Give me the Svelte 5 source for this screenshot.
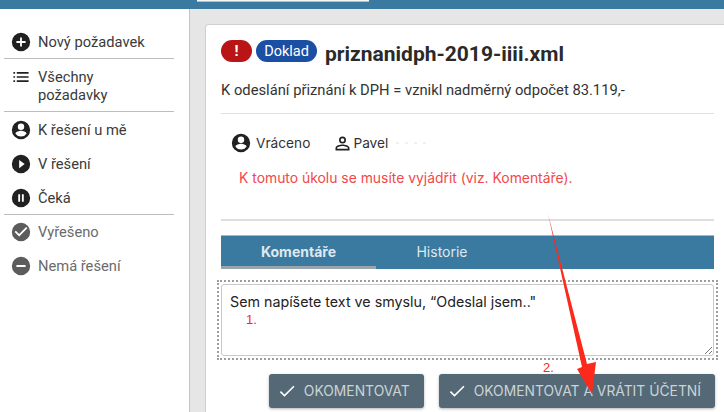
<script>
  const groups = [
    [{ icon: "plus", label: "Nový požadavek" }],
    [{ icon: "list", label: "Všechny požadavky" }],
    [
      { icon: "person", label: "K řešení u mě" },
      { icon: "play", label: "V řešení" },
      { icon: "pause", label: "Čeká" },
    ],
    [
      { icon: "check", label: "Vyřešeno", muted: true },
      { icon: "minus", label: "Nemá řešení", muted: true },
    ],
  ];
</script>

{#snippet icon(name)}
  <svg class="icon" viewBox="0 0 24 24" width="22" height="22" aria-hidden="true">
    {#if name === "plus"}
      <path d="M12 2a10 10 0 1 0 0 20 10 10 0 0 0 0-20zm5 11h-4v4h-2v-4H7v-2h4V7h2v4h4v2z" />
    {:else if name === "list"}
      <path d="M3 8h2V6H3v2zm0 5h2v-2H3v2zm0 5h2v-2H3v2zm4-5h14v-2H7v2zm0 5h14v-2H7v2zM7 6v2h14V6H7z" transform="translate(12 12) scale(.92) translate(-12 -12)" />
    {:else if name === "person"}
      <path d="M12 2a10 10 0 1 0 0 20 10 10 0 0 0 0-20zm0 3a3.5 3.5 0 1 1 0 7 3.5 3.5 0 0 1 0-7zm0 14.2a7.2 7.2 0 0 1-6-3.2c0-2 4-3.1 6-3.1s6 1.1 6 3.1a7.2 7.2 0 0 1-6 3.2z" />
    {:else if name === "play"}
      <path d="M12 2a10 10 0 1 0 0 20 10 10 0 0 0 0-20zm-2 14.5v-9l6 4.5-6 4.5z" />
    {:else if name === "pause"}
      <path d="M12 2a10 10 0 1 0 0 20 10 10 0 0 0 0-20zm-1 14H9V8h2v8zm4 0h-2V8h2v8z" />
    {:else if name === "check"}
      <path d="M12 2a10 10 0 1 0 0 20 10 10 0 0 0 0-20zm-2 15-5-5 1.4-1.4 3.6 3.6 7.6-7.6L19 8l-9 9z" />
    {:else if name === "minus"}
      <path d="M12 2a10 10 0 1 0 0 20 10 10 0 0 0 0-20zm5 11H7v-2h10v2z" />
    {/if}
  </svg>
{/snippet}

{#snippet tick()}
  <svg class="tick" viewBox="0 0 24 24" width="20" height="20" aria-hidden="true">
    <path d="M9 16.2 4.8 12l-1.4 1.4L9 19 21 7l-1.4-1.4L9 16.2z" />
  </svg>
{/snippet}

<div class="page">
  <header class="topbar"><div class="search"></div></header>

  <div class="body">
    <aside class="sidebar">
      {#each groups as group}
        <ul class="group">
          {#each group as item}
            <li class="item" class:muted={item.muted}>
              {@render icon(item.icon)}
              <span class="label">{item.label}</span>
            </li>
          {/each}
        </ul>
      {/each}
    </aside>

    <main class="content">
      <section class="card">
        <div class="title-row">
          <span class="badge alert">!</span>
          <span class="badge doc">Doklad</span>
          <h1>priznanidph-2019-iiii.xml</h1>
        </div>
        <p class="summary">K odeslání přiznání k DPH = vznikl nadměrný odpočet 83.119,-</p>

        <div class="status-box">
          <div class="status-row">
            <span class="status">
              {@render icon("person")}
              Vráceno
            </span>
            <span class="status owner">
              <svg class="icon" viewBox="0 0 24 24" width="21" height="21" aria-hidden="true">
                <path d="M12 5.9a2.1 2.1 0 1 1 0 4.2 2.1 2.1 0 0 1 0-4.2m0 9c3 0 6.1 1.5 6.1 2.1v1.1H5.9V17c0-.6 3.1-2.1 6.1-2.1M12 4a4 4 0 1 0 0 8 4 4 0 0 0 0-8zm0 9c-2.7 0-8 1.3-8 4v3h16v-3c0-2.7-5.3-4-8-4z" />
              </svg>
              Pavel
              <span class="blur"></span>
            </span>
          </div>
          <p class="warning">K tomuto úkolu se musíte vyjádřit (viz. Komentáře).</p>
        </div>

        <nav class="tabs">
          <button class="tab active">Komentáře</button>
          <button class="tab">Historie</button>
        </nav>

        <div class="comment-frame">
          <div class="comment">
            Sem napíšete text ve smyslu, “Odeslal jsem.."
            <svg class="grip" viewBox="0 0 8 8" width="8" height="8" aria-hidden="true">
              <path d="M1 8 8 1M5 8l3-3" stroke="#777" fill="none" />
            </svg>
          </div>
        </div>

        <div class="actions">
          <button class="action">{@render tick()} OKOMENTOVAT</button>
          <button class="action">{@render tick()} OKOMENTOVAT A VRÁTIT ÚČETNÍ</button>
        </div>
      </section>
    </main>
  </div>

  <!-- annotations drawn over the screenshot -->
  <span class="note one">1.</span>
  <span class="note two">2.</span>
  <svg class="arrow" viewBox="0 0 724 412" width="724" height="412" aria-hidden="true">
    <path d="M548 214 L587 364 L596 362 L592 394 L577 369 L582 367 Z" fill="#fc2a1c" />
  </svg>
</div>

<style>
  :global(body) {
    margin: 0;
    background: #e6e6e6;
  }

  .page {
    position: relative;
    width: 724px;
    height: 412px;
    overflow: hidden;
    display: flex;
    flex-direction: column;
    font-family: Roboto, sans-serif;
    color: #212121;
  }

  .topbar {
    flex: 0 0 9px;
    background: #3a79a0;
  }

  .search {
    box-sizing: border-box;
    width: 172px;
    height: 2px;
    margin-left: 197px;
    background: #f7f7f7;
    border-bottom: 1px solid #bcbcbc;
  }

  .body {
    flex: 1;
    display: flex;
    min-height: 0;
  }

  .sidebar {
    flex: 0 0 190px;
    box-sizing: border-box;
    padding: 15px 15px 0 4px;
    background: #fff;
    border-right: 1px solid #c4c4c4;
    font-size: 14.7px;
  }

  .group {
    list-style: none;
    margin: 0;
    padding: 0;
    border-bottom: 1px solid #bdbdbd;
  }

  .group:last-child {
    border-bottom: 0;
  }

  .item {
    display: flex;
    align-items: flex-start;
    gap: 6px;
    padding: 9px 0 7px 6px;
    line-height: 18px;
    color: #3a3a3a;
  }

  .label {
    max-width: 110px;
  }

  .item .icon {
    flex: none;
    margin: -2px 0;
    fill: #212121;
  }

  .item.muted {
    padding: 8px 0 8px 6px;
    color: #6a6a6a;
  }

  .item.muted .icon {
    fill: #5c5c5c;
  }

  .content {
    flex: 1;
    min-width: 0;
    padding: 15px 0 0 15px;
  }

  .card {
    box-sizing: border-box;
    height: 420px;
    padding: 15px 0 0 15px;
    background: #fff;
    border: 1px solid #d0d0d0;
    border-right: 0;
    border-radius: 4px 0 0 0;
  }

  .title-row {
    display: flex;
    align-items: flex-start;
    gap: 4px;
    height: 28px;
  }

  .badge {
    display: inline-flex;
    align-items: center;
    justify-content: center;
    height: 22px;
    border-radius: 11px;
    color: #fff;
  }

  .alert {
    width: 31px;
    background: #b91516;
    font-weight: 700;
    font-size: 15px;
  }

  .doc {
    width: 61px;
    background: #1a4fa3;
    font-size: 14.5px;
  }

  h1 {
    margin: 0 0 0 4px;
    font-size: 21px;
    line-height: 28px;
    font-weight: 700;
    color: #2a2a2a;
  }

  .summary {
    margin: 13px 0 0;
    font-size: 14.75px;
    line-height: 18px;
    color: #333;
  }

  .status-box {
    box-sizing: border-box;
    width: 493px;
    height: 108px;
    margin-top: 14px;
    padding: 18px 0 0 9px;
    border-top: 1px solid #e0e0e0;
    border-bottom: 2px solid #dedede;
  }

  .status-row {
    display: flex;
    gap: 22px;
  }

  .status {
    display: flex;
    align-items: center;
    gap: 4px;
    height: 22px;
    font-family: Inter, sans-serif;
    font-size: 13.7px;
    color: #333;
  }

  .status.owner {
    gap: 0;
  }

  .status .icon {
    fill: #212121;
  }

  .blur {
    width: 30px;
    height: 2px;
    margin-left: 8px;
    background: repeating-linear-gradient(90deg, #f0f0f0 0 3px, transparent 3px 9px);
  }

  .warning {
    margin: 15px 0 0 9px;
    font-family: Inter, sans-serif;
    font-size: 13.9px;
    line-height: 18px;
    color: #f2484a;
  }

  .tabs {
    display: flex;
    box-sizing: border-box;
    width: 493px;
    height: 34px;
    margin-top: 14px;
    background: #3a79a0;
    border-top: 1px solid #9ab9cd;
  }

  .tab {
    width: 155px;
    padding: 0 0 3px;
    border: 0;
    background: none;
    font-family: Inter, sans-serif;
    font-size: 14px;
    color: #dfe8ee;
  }

  .tab + .tab {
    width: 132px;
  }

  .tab.active {
    padding-bottom: 0;
    font-weight: 700;
    border-bottom: 3px solid #9aa4aa;
  }

  .comment-frame {
    box-sizing: border-box;
    width: 501px;
    height: 80px;
    margin: 11px 0 0 -4px;
    padding: 2px;
    border: 2px dotted #9e9e9e;
  }

  .comment {
    position: relative;
    box-sizing: border-box;
    height: 100%;
    padding: 7px 8px;
    border: 1px solid #c8c8c8;
    border-radius: 3px;
    font-family: Inter, sans-serif;
    font-size: 14.28px;
    line-height: 20px;
    color: #222;
  }

  .grip {
    position: absolute;
    right: 1px;
    bottom: 1px;
  }

  .actions {
    display: flex;
    gap: 15px;
    width: 494px;
    justify-content: flex-end;
    margin-top: 14px;
  }

  .action {
    display: flex;
    align-items: center;
    gap: 7px;
    height: 34px;
    padding: 0 14px 0 8px;
    border: 0;
    border-radius: 3px;
    background: #546975;
    box-shadow: 0 1px 3px rgba(0, 0, 0, 0.3);
    font-family: Inter, sans-serif;
    font-size: 13.85px;
    color: #ccd3d7;
  }

  .tick {
    fill: #fff;
  }

  .note {
    position: absolute;
    font-family: "Liberation Sans", sans-serif;
    font-size: 13px;
    color: #f5261c;
  }

  .note.one {
    left: 246px;
    top: 312px;
  }

  .note.two {
    left: 543px;
    top: 360px;
  }

  .arrow {
    position: absolute;
    left: 0;
    top: 0;
    pointer-events: none;
  }
</style>
